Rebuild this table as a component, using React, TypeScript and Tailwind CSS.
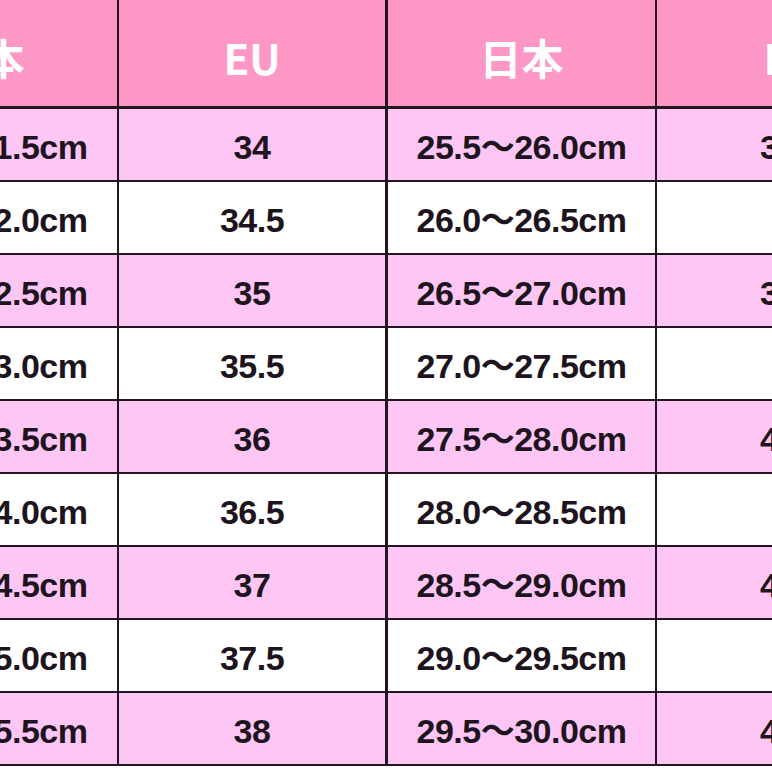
const rows = [
  { jpW: "21.0～21.5cm", eu: "34", jpM: "25.5～26.0cm", euM: "38.5" },
  { jpW: "21.5～22.0cm", eu: "34.5", jpM: "26.0～26.5cm", euM: "39" },
  { jpW: "22.0～22.5cm", eu: "35", jpM: "26.5～27.0cm", euM: "39.5" },
  { jpW: "22.5～23.0cm", eu: "35.5", jpM: "27.0～27.5cm", euM: "40" },
  { jpW: "23.0～23.5cm", eu: "36", jpM: "27.5～28.0cm", euM: "40.5" },
  { jpW: "23.5～24.0cm", eu: "36.5", jpM: "28.0～28.5cm", euM: "41" },
  { jpW: "24.0～24.5cm", eu: "37", jpM: "28.5～29.0cm", euM: "41.5" },
  { jpW: "24.5～25.0cm", eu: "37.5", jpM: "29.0～29.5cm", euM: "42" },
  { jpW: "25.0～25.5cm", eu: "38", jpM: "29.5～30.0cm", euM: "42.5" },
];

const headers = ["日本", "EU", "日本", "EU"];

// column widths incl. their right rule
const cols = [
  "w-[271px] shrink-0 border-r-2",
  "w-[269px] shrink-0 border-r-[3px]",
  "w-[269px] shrink-0 border-r-2",
  "w-[270px] shrink-0",
];

export default function App() {
  return (
    <main className="h-[772px] w-[772px] overflow-hidden bg-white">
      <div className="ml-[-152px] w-[1080px]">
        <div className="flex h-[109px] border-b-[3px] border-[#221420] bg-[#fd97c6]">
          {headers.map((h, i) => (
            <div
              key={i}
              className={`${cols[i]} flex items-center justify-center border-[#221420] pt-2 text-[42px] font-bold leading-none text-white`}
              style={{ fontFamily: '"Noto Sans CJK JP", "Noto Sans", sans-serif' }}
            >
              {h}
            </div>
          ))}
        </div>
        {rows.map((r, idx) => (
          <div
            key={idx}
            className={`flex h-[73px] border-b-2 border-[#221420] ${
              idx % 2 === 0 ? "bg-[#fdc6f5]" : "bg-white"
            }`}
          >
            {[r.jpW, r.eu, r.jpM, r.euM].map((v, i) => (
              <div
                key={i}
                className={`${cols[i]} flex items-center justify-center border-[#221420] pt-1 text-[34px] font-bold leading-none tracking-[-0.5px] text-[#1d1420]`}
                style={{ fontFamily: '"Liberation Sans", "Noto Sans CJK JP", sans-serif' }}
              >
                {v}
              </div>
            ))}
          </div>
        ))}
      </div>
    </main>
  );
}
